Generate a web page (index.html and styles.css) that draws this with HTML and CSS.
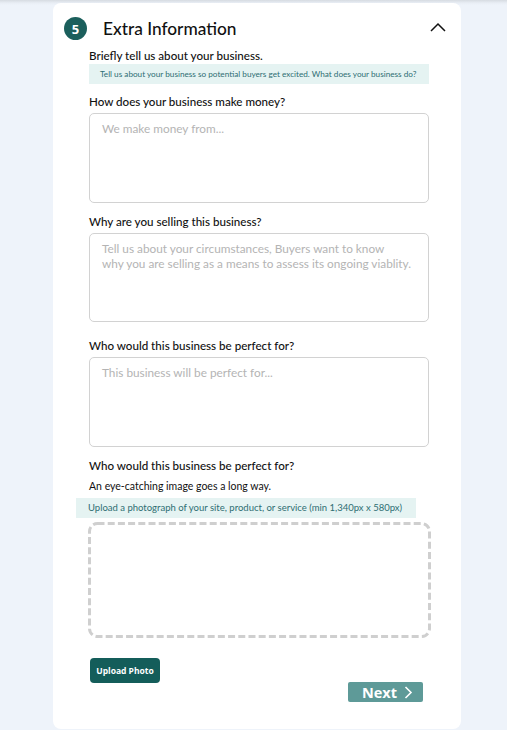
FILE: index.html
```html
<!DOCTYPE html>
<html lang="en">
<head>
<meta charset="utf-8">
<title>Extra Information</title>
<link rel="stylesheet" href="styles.css">
</head>
<body>
<main class="card">
  <header class="section-head">
    <span class="step-badge">5</span>
    <h2 class="section-title">Extra Information</h2>
    <svg class="chevron" width="16" height="10" viewBox="0 0 16 10"><path d="M1 9 L8 2 L15 9" fill="none" stroke="#111" stroke-width="1.5"/></svg>
  </header>

  <div class="form">
    <p class="label label-first">Briefly tell us about your business.</p>
    <div class="hint">Tell us about your business so potential buyers get excited. What does your business do?</div>

    <p class="label label-q1">How does your business make money?</p>
    <textarea class="field" placeholder="We make money from..."></textarea>

    <p class="label label-q2">Why are you selling this business?</p>
    <textarea class="field field-tall" placeholder="Tell us about your circumstances, Buyers want to know&#10;why you are selling as a means to assess its ongoing viablity."></textarea>

    <p class="label label-q3">Who would this business be perfect for?</p>
    <textarea class="field" placeholder="This business will be perfect for..."></textarea>

    <p class="label label-q4">Who would this business be perfect for?</p>
    <p class="sublabel">An eye-catching image goes a long way.</p>
    <div class="hint hint-upload">Upload a photograph of your site, product, or service (min 1,340px x 580px)</div>
    <div class="dropzone">
      <svg width="343" height="116" viewBox="0 0 343 116"><rect x="1.5" y="1.5" width="340" height="113" rx="8" ry="8" fill="none" stroke="#cfcfcf" stroke-width="3" stroke-dasharray="7 3.2"/></svg>
    </div>

    <div class="actions">
      <button class="btn-upload" type="button">Upload Photo</button>
      <button class="btn-next" type="button">Next <svg width="9" height="13" viewBox="0 0 9 13"><path d="M1.5 1 L7 6.5 L1.5 12" fill="none" stroke="#fff" stroke-width="1.6"/></svg></button>
    </div>
  </div>
</main>
</body>
</html>
```
FILE: styles.css
```css
* { box-sizing: border-box; }
html, body { margin: 0; padding: 0; }
body {
  background: linear-gradient(#d6dbe1 0, #e9eef5 3px, #eef3fa 5px);
  background-color: #eef3fa;
  font-family: Lato, "Noto Sans", sans-serif;
  color: #111;
  min-height: 730px;
  padding-top: 3px;
}
.card {
  margin-left: 53px;
  width: 408px;
  height: 726px;
  background: #fff;
  border-radius: 8px;
  padding: 14px 32px 0 11px;
}
.section-head {
  display: flex;
  align-items: center;
  height: 23px;
}
.step-badge {
  width: 23px;
  height: 23px;
  border-radius: 50%;
  background: #1b5f5c;
  color: #fff;
  font-family: "Open Sans", sans-serif;
  font-weight: 700;
  font-size: 13px;
  display: flex;
  align-items: center;
  justify-content: center;
}
.section-title {
  margin: 0 0 0 16px;
  font-size: 17.3px;
  font-weight: 500;
  flex: 1;
  line-height: 23px;
}
.chevron { margin-right: -17px; margin-top: -4px; }
.form {
  padding-left: 25px;
  display: flex;
  flex-direction: column;
}
.label {
  margin: 0;
  font-size: 11.6px;
  font-weight: 500;
  line-height: 16px;
  height: 16px;
  white-space: nowrap;
}
.label-first { margin-top: 8px; }
.label-q1 { margin-top: 10px; margin-bottom: 3px; }
.label-q2 { margin-top: 11px; margin-bottom: 3px; }
.label-q3 { margin-top: 16px; margin-bottom: 3px; }
.label-q4 { margin-top: 11px; }
.hint {
  height: 20px;
  background: #e5f3f2;
  color: #2e6e72;
  font-size: 8.2px;
  line-height: 20px;
  padding-left: 11px;
  white-space: nowrap;
  width: 340px;
}
.field {
  display: block;
  width: 340px;
  height: 90px;
  border: 1px solid #d2d2d2;
  border-radius: 5px;
  padding: 7px 2px 7px 12px;
  font-family: Lato, "Noto Sans", sans-serif;
  font-size: 11.8px;
  line-height: 15px;
  resize: none;
  outline: none;
  background: #fff;
}
.field-tall { height: 89px; }
.field::placeholder { color: #b4b4b4; }
.sublabel {
  margin: 5px 0 0;
  font-size: 10.5px;
  line-height: 14px;
  height: 14px;
}
.hint-upload {
  margin-top: 5px;
  margin-left: -13px;
  padding-left: 12px;
  font-size: 9.5px;
}
.dropzone {
  margin-top: 4px;
  margin-left: -1px;
  width: 343px;
  height: 116px;
}
.dropzone svg { display: block; }
.actions {
  display: flex;
  flex-direction: column;
  margin-top: 20px;
}
.btn-upload {
  align-self: flex-start;
  margin-left: 1px;
  width: 70px;
  height: 25px;
  border: 0;
  border-radius: 4px;
  background: #145d5a;
  color: #fff;
  font-family: "Open Sans", sans-serif;
  font-weight: 700;
  font-size: 8.5px;
  padding: 0;
}
.btn-next {
  align-self: flex-end;
  margin-right: 6px;
  margin-top: -1px;
  width: 75px;
  height: 20px;
  border: 0;
  border-radius: 2px;
  background: #5e9a98;
  color: #fff;
  font-family: "Open Sans", sans-serif;
  font-weight: 700;
  font-size: 14.5px;
  display: flex;
  align-items: center;
  justify-content: center;
  gap: 7px;
  padding: 0 0 0 4px;
}
```
